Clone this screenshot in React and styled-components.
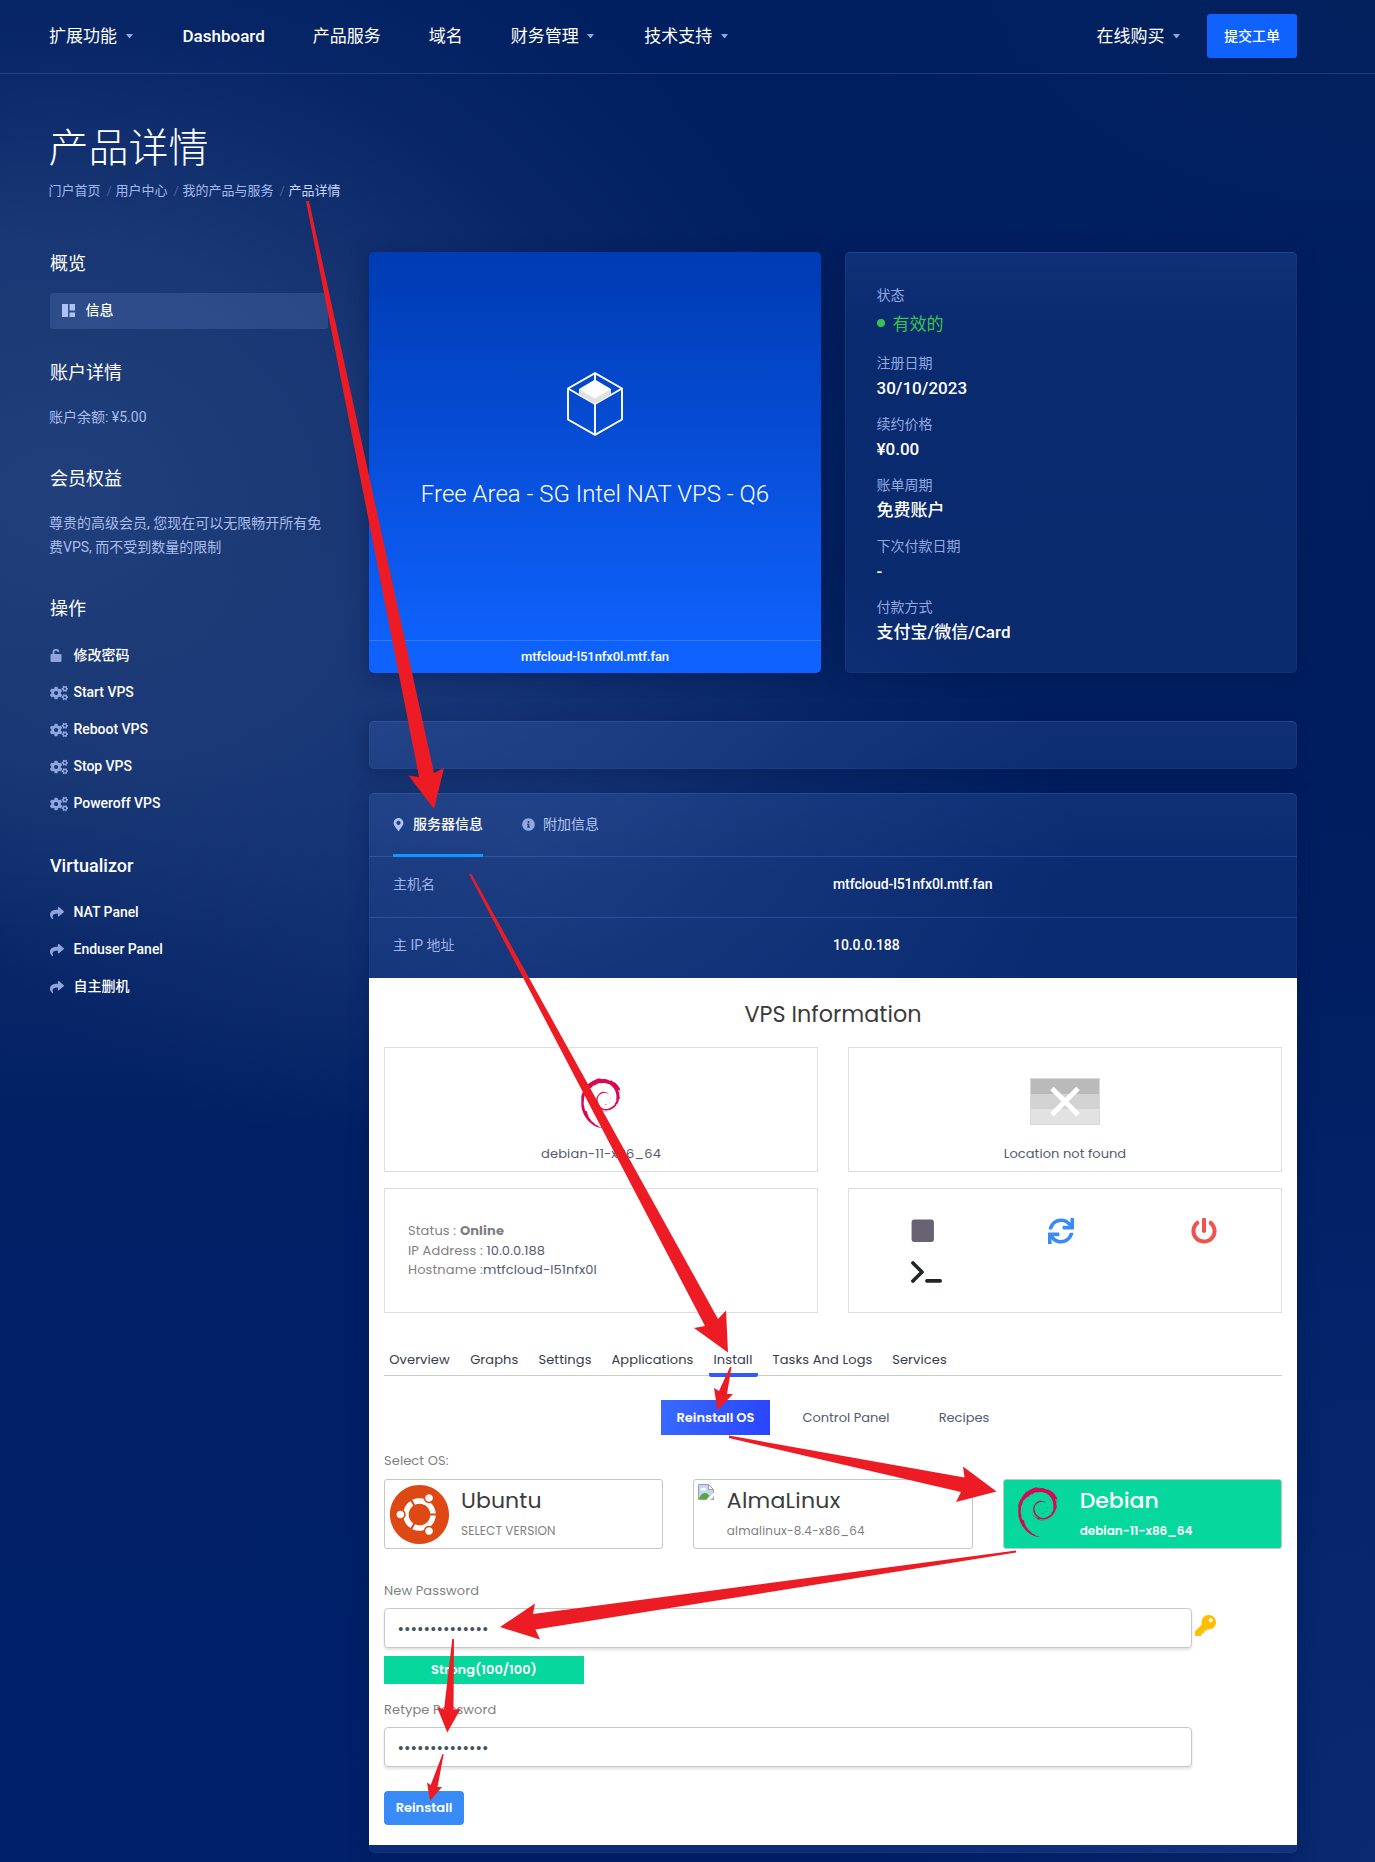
import React from "react";
import styled, { createGlobalStyle } from "styled-components";
import { FaCogs, FaShare, FaMapMarkerAlt, FaInfoCircle, FaStop, FaSync, FaPowerOff, FaUbuntu, FaKey } from "react-icons/fa";
import { SiDebian } from "react-icons/si";

const ui = `Roboto, "Noto Sans CJK SC", sans-serif`;
const geo = `Poppins, Inter, "Noto Sans CJK SC", sans-serif`;

const Global = createGlobalStyle`
  * { box-sizing: border-box; }
  body { margin: 0; background: #001f60; font-family: ${ui}; color: #fff; }
`;

const Page = styled.div`
  position: relative;
  width: 1375px;
  height: 1862px;
  overflow: hidden;
  background:
    radial-gradient(ellipse 560px 900px at 1375px 1862px, rgba(18, 48, 116, 0.55), rgba(18, 48, 116, 0) 100%),
    radial-gradient(ellipse 520px 300px at 1375px 0, rgba(4, 34, 92, 0.7), rgba(4, 34, 92, 0) 100%),
    radial-gradient(ellipse 560px 330px at 520px 840px, rgba(34, 66, 130, 0.6), rgba(24, 54, 116, 0) 100%),
    radial-gradient(ellipse 800px 660px at 60px 500px, rgba(36, 66, 124, 0.92) 0%, rgba(32, 62, 122, 0.78) 40%, rgba(18, 48, 112, 0.42) 72%, rgba(0, 31, 98, 0) 100%),
    linear-gradient(180deg, #001f60 0%, #001e5e 40%, #001f66 70%, #00206a 100%);
`;

/* ---------- header ---------- */
const Header = styled.header`
  display: flex;
  justify-content: space-between;
  align-items: flex-start;
  height: 74px;
  padding: 14px 78px 0 49px;
  border-bottom: 1px solid rgba(110, 145, 225, 0.24);
`;
const Nav = styled.nav`
  display: flex;
  gap: 48px;
`;
const NavItem = styled.a`
  display: flex;
  align-items: center;
  height: 44px;
  font-size: 17px;
  font-weight: ${(p) => (p.$latin ? 500 : 400)};
  line-height: 44px;
`;
const Caret = styled.i`
  width: 7px;
  margin: 0 2px 0 8.5px;
  border: 3.5px solid transparent;
  border-top: 4px solid #8ea5dd;
  border-bottom: 0;
`;
const HeaderRight = styled.div`
  display: flex;
  gap: 25px;
`;
const Submit = styled.button`
  width: 90px;
  height: 44px;
  padding: 0 0 1px;
  border: 0;
  border-radius: 3px;
  background: #0f62fe;
  color: #fff;
  font: 500 14px/42px ${ui};
`;

/* ---------- title ---------- */
const TitleBlock = styled.div`
  padding: 51px 0 0 48.5px;
`;
const H1 = styled.h1`
  margin: 0;
  font-size: 40px;
  font-weight: 300;
  line-height: 48px;
`;
const Crumbs = styled.div`
  display: flex;
  gap: 6px;
  margin-top: 9px;
  font-size: 13px;
  line-height: 18px;
  color: #a3b9ee;
`;
const Slash = styled.span`
  width: 3px;
  color: #48629f;
`;
const Current = styled.span`
  color: #c9d7fb;
`;

/* ---------- body ---------- */
const Body = styled.div`
  display: grid;
  grid-template-columns: 280px 928px;
  column-gap: 40px;
  margin-top: 52px;
  padding-left: 49px;
`;
const Side = styled.aside`
  padding: 0 1px;
`;
const SideTitle = styled.h3`
  margin: ${(p) => p.$top || 0}px 0 0;
  font-size: 18px;
  font-weight: ${(p) => (p.$latin ? 500 : 400)};
  line-height: 24px;
`;
const ActiveItem = styled.div`
  display: flex;
  align-items: center;
  gap: 10.5px;
  height: 36px;
  margin-top: 17px;
  padding: 0 12px 2px;
  border-radius: 3px;
  background: rgba(140, 170, 240, 0.17);
  font-size: 14px;
  font-weight: 500;
  line-height: 34px;
`;
const SideText = styled.p`
  margin: 20px -1px 0;
  font-size: 14px;
  line-height: 24px;
  color: #aabeee;
`;
const Actions = styled.div`
  margin-top: 16px;
`;
const Action = styled.a`
  display: flex;
  align-items: center;
  height: 37px;
  font-size: 14px;
  font-weight: 500;
  line-height: 37px;
  letter-spacing: -0.03px;
  svg { color: #8ea5dd; }
`;
const ActionIcon = styled.span`
  display: flex;
  width: 23.5px;
`;

const Cards = styled.div`
  display: grid;
  grid-template-columns: 452px 452px;
  gap: 24px;
`;
const glass = `
  border-radius: 5px;
  background: linear-gradient(180deg, rgba(84, 124, 218, 0.19) 0, rgba(74, 114, 208, 0.14) 80px, rgba(74, 114, 208, 0.14) 100%);
  box-shadow: inset 0 0 0 1px rgba(110, 145, 230, 0.07), inset 0 1px 1px rgba(120, 155, 240, 0.13), 0 4px 20px rgba(0, 20, 70, 0.35);
`;
const Product = styled.section`
  display: flex;
  flex-direction: column;
  height: 421px;
  border-radius: 5px;
  background: linear-gradient(180deg, #003cb4 0%, #003eb8 8%, #0f62fe 95%);
  box-shadow: 0 4px 20px rgba(0, 20, 70, 0.4);
`;
const ProductMain = styled.div`
  display: flex;
  flex-direction: column;
  align-items: center;
  height: 389px;
  padding-top: 120px;
  border-bottom: 1px solid rgba(255, 255, 255, 0.15);
`;
const ProductName = styled.div`
  margin-top: 43px;
  font-size: 24px;
  font-weight: 300;
  line-height: 30px;
`;
const ProductHost = styled.div`
  font-size: 13px;
  font-weight: 500;
  line-height: 31px;
  letter-spacing: -0.08px;
  text-align: center;
`;
const Details = styled.section`
  ${glass}
  height: 421px;
  padding: 31px 31.5px;
`;
const Detail = styled.div`
  height: 61px;
  &:first-child { height: 68px; }
`;
const DetailLabel = styled.div`
  font-size: 14px;
  line-height: 24px;
  color: #92a9e0;
`;
const DetailValue = styled.div`
  display: flex;
  align-items: center;
  gap: 8px;
  height: 26px;
  line-height: 26px;
  font-size: 17px;
  font-weight: ${(p) => (p.$ok ? 400 : 500)};
  color: ${(p) => (p.$ok ? "#3cc14f" : "#fff")};
  margin-top: ${(p) => (p.$ok ? 4 : 0)}px;
`;
const Dot = styled.i`
  width: 8px;
  height: 8px;
  margin-top: -2px;
  border-radius: 50%;
  background: #3cc14f;
`;
const Strip = styled.div`
  ${glass}
  height: 48px;
  margin: 48px 0 24px;
`;
const Panel = styled.section`
  ${glass}
  padding-bottom: 8px;
`;
const PanelTabs = styled.div`
  display: flex;
  gap: 40px;
  height: 64px;
  padding: 0 24px;
  border-bottom: 1px solid rgba(120, 155, 240, 0.24);
`;
const PanelTab = styled.a`
  display: flex;
  align-items: center;
  gap: 7px;
  height: 64px;
  padding-bottom: ${(p) => (p.$on ? 0 : 3)}px;
  font-size: 14px;
  line-height: 60px;
  font-weight: ${(p) => (p.$on ? 500 : 400)};
  color: ${(p) => (p.$on ? "#fff" : "#b4c7f6")};
  border-bottom: ${(p) => (p.$on ? "3px solid #0f98ff" : "0")};
  svg { color: ${(p) => (p.$on ? "#adc2f5" : "#92a8e0")}; margin: 1px 1px 0 -1px; }
`;
const Row = styled.div`
  display: grid;
  grid-template-columns: 440px 1fr;
  height: ${(p) => (p.$last ? 60 : 61)}px;
  padding: 15px 24px 0;
  border-bottom: ${(p) => (p.$last ? "0" : "1px solid rgba(120, 155, 240, 0.24)")};
  font-size: 14px;
  line-height: 24px;
  color: #9fb4e8;
`;
const RowValue = styled.span`
  color: #fff;
  font-weight: 500;
  letter-spacing: -0.08px;
`;

/* ---------- VPS sheet ---------- */
const Sheet = styled.div`
  height: 867px;
  padding: 22px 15px 0;
  background: #fff;
  color: #515b6e;
  font-family: ${geo};
  font-size: 13px;
`;
const SheetTitle = styled.h2`
  margin: 0 0 17px;
  color: #3b3b3b;
  font-size: 22.3px;
  font-weight: 400;
  line-height: 30px;
  text-align: center;
`;
const InfoGrid = styled.div`
  display: grid;
  grid-template-columns: 434px 434px;
  grid-auto-rows: 125px;
  gap: 16px 30px;
`;
const InfoBox = styled.div`
  border: 1px solid #dcdee3;
`;
const Centered = styled(InfoBox)`
  display: flex;
  flex-direction: column;
  align-items: center;
  padding-top: 30px;
  letter-spacing: ${(p) => p.$ls || 0}px;
`;
const Figure = styled.div`
  display: flex;
  height: 50px;
  margin-bottom: 16px;
  color: #d70751;
`;
const StatusBox = styled(InfoBox)`
  padding: 32px 23px;
  line-height: 19.7px;
  letter-spacing: 0.13px;
  white-space: pre;
`;
const Muted = styled.span`
  color: #7f7f7f;
`;
const Controls = styled(InfoBox)`
  display: flex;
  flex-wrap: wrap;
  align-content: flex-start;
  padding: 28px 0 0 60.5px;
`;
const Control = styled.span`
  display: flex;
  align-items: center;
  width: ${(p) => p.$w}px;
  height: ${(p) => p.$h || 28}px;
  padding-left: ${(p) => p.$pl || 0}px;
  color: ${(p) => p.$c};
`;
const Tabs = styled.nav`
  display: flex;
  gap: 10px;
  height: 36px;
  margin-top: 27px;
  border-bottom: 1px solid #ccc;
`;
const Tab = styled.a`
  height: 37px;
  width: ${(p) => p.$w}px;
  padding-top: 10px;
  border-bottom: 4px solid ${(p) => (p.$on ? "#3258ff" : "transparent")};
  border-radius: 2px;
  color: #343c47;
  line-height: 20px;
  letter-spacing: 0.1px;
  text-align: center;
  white-space: nowrap;
`;
const Pills = styled.div`
  display: flex;
  margin: 24px 0 16px 277px;
`;
const Pill = styled.a`
  width: ${(p) => p.$w}px;
  height: 35px;
  line-height: 35px;
  text-align: center;
  background: ${(p) => (p.$on ? "linear-gradient(100deg, #396aff, #2945ff)" : "none")};
  color: ${(p) => (p.$on ? "#fff" : "#515b6e")};
  font-weight: ${(p) => (p.$on ? 600 : 400)};
`;
const Label = styled.div`
  margin: ${(p) => p.$m || "0"};
  color: #7f7f7f;
  line-height: 20px;
  letter-spacing: 0.1px;
`;
const OsGrid = styled.div`
  display: grid;
  grid-template-columns: repeat(3, 1fr);
  gap: 30px;
`;
const OsCard = styled.div`
  display: flex;
  height: 70px;
  padding: 4px;
  border: 1px solid #c4c6c8;
  border-radius: 3px;
  background: ${(p) => (p.$on ? "#06d79c" : "#fff")};
`;
const OsLogo = styled.div`
  width: ${(p) => p.$w}px;
  padding: ${(p) => p.$p || "0"};
  line-height: 0;
`;
const OsName = styled.div`
  padding-top: 1px;
  font-size: 22px;
  line-height: 31px;
  letter-spacing: ${(p) => p.$ls || 0}px;
  font-weight: ${(p) => (p.$on ? 500 : 400)};
  color: ${(p) => (p.$on ? "#fff" : "#3b3b3b")};
`;
const OsVersion = styled.div`
  font-size: 12px;
  line-height: 30px;
  letter-spacing: ${(p) => p.$ls || 0}px;
  font-weight: ${(p) => (p.$on ? 600 : 400)};
  color: ${(p) => (p.$on ? "#fff" : "#7f7f7f")};
  white-space: nowrap;
`;
const Field = styled.div`
  display: flex;
  gap: 3px;
`;
const Input = styled.input`
  display: block;
  width: 808px;
  height: 40px;
  padding: 0 12.5px;
  border: 1px solid #c8c8c8;
  border-radius: 4px;
  outline: 0;
  background: #fff;
  box-shadow: 0 2px 3px rgba(0, 0, 0, 0.12);
  color: #45545f;
  font: 15.8px ${geo};
`;
const KeyWrap = styled.span`
  padding-top: 7px;
`;
const Strength = styled.div`
  width: 200px;
  height: 28px;
  margin: 8px 0 16px;
  background: #06d79c;
  color: #fff;
  font-weight: 600;
  line-height: 27px;
  text-align: center;
`;
const Reinstall = styled.button`
  display: block;
  width: 80px;
  height: 34px;
  margin-top: 24px;
  padding: 0;
  border: 0;
  border-radius: 4px;
  background: #398bf7;
  color: #fff;
  font: 600 13px ${geo};
`;
const Overlay = styled.svg`
  position: absolute;
  inset: 0;
  pointer-events: none;
`;

const LayoutIcon = () => (
  <svg width="13" height="13" viewBox="0 0 13 13" fill="#adc2f5">
    <path d="M0 0h6v13H0zM7.5 0H13v6.5H7.5zM7.5 8.5H13V13H7.5z" />
  </svg>
);
const UnlockIcon = () => (
  <svg width="12" height="13" viewBox="0 0 12 13" fill="currentColor">
    <rect x="0.5" y="5" width="11" height="8" rx="1" />
    <path d="M3.500 6V3.600a2.500 2.500 0 0 1 5-.6" fill="none" stroke="currentColor" strokeWidth="1.900" />
  </svg>
);
const TerminalIcon = () => (
  <svg width="31" height="22" viewBox="0 0 31 22" fill="none" stroke="currentColor" strokeWidth="3.600" strokeLinecap="round" strokeLinejoin="round">
    <path d="M1.900 1.900 11 11 1.900 20.100" />
    <path d="M15.900 19.900h13.300" />
  </svg>
);
const Cube = () => (
  <svg width="58" height="64" viewBox="0 0 58 64" fill="none" stroke="#fff" strokeWidth="1.9" strokeLinejoin="round">
    <path d="M29 1.200 56 16.500v31L29 62.800 2 47.500v-31z" />
    <path d="M2 16.500 29 32 56 16.500M29 32v30.800M29 1.200V9" />
    <path d="M13 17v5l16 9.500 16-9.500v-5z" fill="#dfe1e5" stroke="none" />
    <path d="M29 7.500 45 17 29 26.500 13 17z" fill="#fff" stroke="none" />
  </svg>
);
const MissingFlag = () => (
  <svg width="70" height="47" viewBox="0 0 70 47">
    <rect width="70" height="16" fill="#bababa" />
    <rect y="16" width="70" height="15" fill="#d2d2d2" />
    <rect y="31" width="70" height="16" fill="#e2e2e2" />
    <rect x=".5" y=".5" width="69" height="46" fill="none" stroke="#d8d8d8" />
    <path d="M22 10.500 48 36.500M48 10.500 22 36.500" stroke="#fff" strokeWidth="5" />
  </svg>
);
const BrokenImage = () => (
  <svg width="16" height="16" viewBox="0 0 16 16">
    <path d="M.5.500h10l5 5v10H.500z" fill="#c3d5f5" stroke="#9aa0a8" />
    <path d="M10.500.500v5h5z" fill="#fff" stroke="#9aa0a8" />
    <path d="M2.500 6.500a1.500 1.500 0 0 1 2-2 2 2 0 0 1 3.500 2z" fill="#fff" />
    <path d="M1 15c1-4 4-6 6-6s4 2 4.500 3l-3 3z" fill="#54a838" />
    <path d="M8 16.500 16.500 8v3.500L11.500 16.500z" fill="#fff" />
  </svg>
);

const details = [
  ["注册日期", "30/10/2023"],
  ["续约价格", "¥0.00"],
  ["账单周期", "免费账户"],
  ["下次付款日期", "-"],
  ["付款方式", "支付宝/微信/Card"],
];
const tabs = [["Overview", 71], ["Graphs", 58.5], ["Settings", 63], ["Applications", 92], ["Install", 49], ["Tasks And Logs", 110], ["Services", 64]];
const arrows = [
  "306,201 309,201 434,773 444,768 434,809 408.500,775.500 419,777",
  "469,874 471.500,874 718,1319 726,1310.500 728,1352.500 694,1328 705,1326",
  "730,1367 731.500,1367 727,1394 733,1394 717.500,1410.500 714,1388 719,1391",
  "729,1435.500 964.500,1477.500 963,1466.500 996.500,1491.500 956,1502 961,1492 729,1438",
  "1016,1550.500 1016,1552.500 535.500,1629.500 540,1639.500 500,1627 535,1603.500 533,1614",
  "452.300,1639 454,1639 453.500,1709.500 460.500,1709 447.300,1732.500 437,1707 444,1709.500",
  "442.500,1754 443.700,1754 437.500,1787 442,1787 430,1801 427,1782.500 430.700,1785",
];

export default function App() {
  return (
    <Page>
      <Global />
      <Header>
        <Nav>
          <NavItem>扩展功能<Caret /></NavItem>
          <NavItem $latin>Dashboard</NavItem>
          <NavItem>产品服务</NavItem>
          <NavItem>域名</NavItem>
          <NavItem>财务管理<Caret /></NavItem>
          <NavItem>技术支持<Caret /></NavItem>
        </Nav>
        <HeaderRight>
          <NavItem>在线购买<Caret /></NavItem>
          <Submit>提交工单</Submit>
        </HeaderRight>
      </Header>
      <TitleBlock>
        <H1>产品详情</H1>
        <Crumbs>
          <span>门户首页</span><Slash>/</Slash>
          <span>用户中心</span><Slash>/</Slash>
          <span>我的产品与服务</span><Slash>/</Slash>
          <Current>产品详情</Current>
        </Crumbs>
      </TitleBlock>
      <Body>
        <Side>
          <SideTitle>概览</SideTitle>
          <ActiveItem><LayoutIcon />信息</ActiveItem>
          <SideTitle $top={32}>账户详情</SideTitle>
          <SideText>账户余额: ¥5.00</SideText>
          <SideTitle $top={38}>会员权益</SideTitle>
          <SideText>尊贵的高级会员, 您现在可以无限畅开所有免费VPS, 而不受到数量的限制</SideText>
          <SideTitle $top={38}>操作</SideTitle>
          <Actions>
            <Action><ActionIcon><UnlockIcon /></ActionIcon>修改密码</Action>
            {["Start VPS", "Reboot VPS", "Stop VPS", "Poweroff VPS"].map((t) => (
              <Action key={t}><ActionIcon><FaCogs size={18} /></ActionIcon>{t}</Action>
            ))}
          </Actions>
          <SideTitle $top={32} $latin>Virtualizor</SideTitle>
          <Actions>
            {["NAT Panel", "Enduser Panel", "自主删机"].map((t) => (
              <Action key={t}><ActionIcon><FaShare size={14} /></ActionIcon>{t}</Action>
            ))}
          </Actions>
        </Side>
        <main>
          <Cards>
            <Product>
              <ProductMain>
                <Cube />
                <ProductName>Free Area - SG Intel NAT VPS - Q6</ProductName>
              </ProductMain>
              <ProductHost>mtfcloud-l51nfx0l.mtf.fan</ProductHost>
            </Product>
            <Details>
              <Detail>
                <DetailLabel>状态</DetailLabel>
                <DetailValue $ok><Dot />有效的</DetailValue>
              </Detail>
              {details.map(([k, v]) => (
                <Detail key={k}>
                  <DetailLabel>{k}</DetailLabel>
                  <DetailValue>{v}</DetailValue>
                </Detail>
              ))}
            </Details>
          </Cards>
          <Strip />
          <Panel>
            <PanelTabs>
              <PanelTab $on><FaMapMarkerAlt size={13} />服务器信息</PanelTab>
              <PanelTab><FaInfoCircle size={13} />附加信息</PanelTab>
            </PanelTabs>
            <Row><span>主机名</span><RowValue>mtfcloud-l51nfx0l.mtf.fan</RowValue></Row>
            <Row $last><span>主 IP 地址</span><RowValue>10.0.0.188</RowValue></Row>
            <Sheet>
              <SheetTitle>VPS Information</SheetTitle>
              <InfoGrid>
                <Centered $ls={0.18}>
                  <Figure><SiDebian size={50} /></Figure>
                  debian-11-x86_64
                </Centered>
                <Centered $ls={0.05}>
                  <Figure><MissingFlag /></Figure>
                  Location not found
                </Centered>
                <StatusBox>
                  <div><Muted>Status : <b>Online</b></Muted></div>
                  <div><Muted>IP Address : </Muted>10.0.0.188</div>
                  <div><Muted>Hostname :</Muted>mtfcloud-l51nfx0l</div>
                </StatusBox>
                <Controls>
                  <Control $w={138} $c="#686373"><FaStop size={25.5} /></Control>
                  <Control $w={143} $c="#398bf7"><FaSync size={26} /></Control>
                  <Control $w={60} $c="#ef5350"><FaPowerOff size={26} /></Control>
                  <Control $w={60} $h={54} $pl={1} $c="#212529"><TerminalIcon /></Control>
                </Controls>
              </InfoGrid>
              <Tabs>
                {tabs.map(([t, w]) => (
                  <Tab key={t} $w={w} $on={t === "Install"}>{t}</Tab>
                ))}
              </Tabs>
              <Pills>
                <Pill $w={109} $on>Reinstall OS</Pill>
                <Pill $w={152}>Control Panel</Pill>
                <Pill $w={84}>Recipes</Pill>
              </Pills>
              <Label $m="0 0 8px">Select OS:</Label>
              <OsGrid>
                <OsCard>
                  <OsLogo $w={72}><FaUbuntu size={61} color="#dd4814" /></OsLogo>
                  <div>
                    <OsName $ls={0.1}>Ubuntu</OsName>
                    <OsVersion $ls={0.12}>SELECT VERSION</OsVersion>
                  </div>
                </OsCard>
                <OsCard>
                  <OsLogo $w={28.5}><BrokenImage /></OsLogo>
                  <div>
                    <OsName $ls={0.25}>AlmaLinux</OsName>
                    <OsVersion $ls={0.18}>almalinux-8.4-x86_64</OsVersion>
                  </div>
                </OsCard>
                <OsCard $on>
                  <OsLogo $w={72} $p="3px 0 0 5px"><SiDebian size={50} color="#d70751" /></OsLogo>
                  <div>
                    <OsName $on>Debian</OsName>
                    <OsVersion $on>debian-11-x86_64</OsVersion>
                  </div>
                </OsCard>
              </OsGrid>
              <Label $m="32px 0 7px">New Password</Label>
              <Field>
                <Input type="password" defaultValue="Xk29vQmz71LpTd" />
                <KeyWrap><FaKey size={21} color="#ffbf00" /></KeyWrap>
              </Field>
              <Strength>Strong(100/100)</Strength>
              <Label $m="0 0 7px">Retype Password</Label>
              <Input type="password" defaultValue="Xk29vQmz71LpTd" />
              <Reinstall>Reinstall</Reinstall>
            </Sheet>
          </Panel>
        </main>
      </Body>
      <Overlay width="1375" height="1862" viewBox="0 0 1375 1862" fill="#ed1c24">
        {arrows.map((pts) => <polygon key={pts} points={pts} />)}
      </Overlay>
    </Page>
  );
}
